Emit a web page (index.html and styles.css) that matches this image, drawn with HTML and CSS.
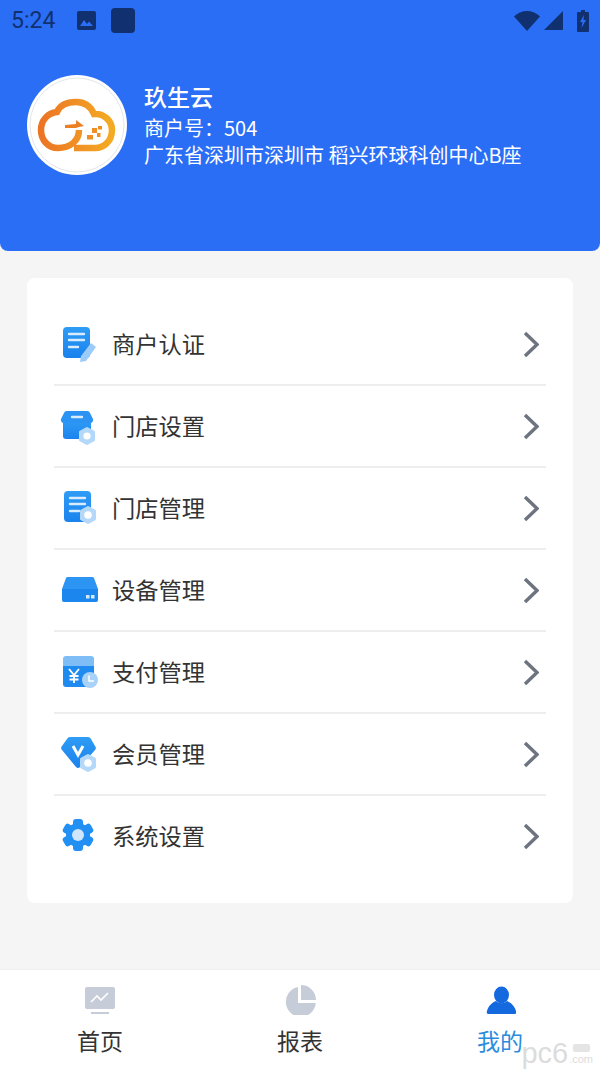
FILE: index.html
```html
<!DOCTYPE html>
<html lang="zh-CN">
<head>
    <meta charset="UTF-8">
    <meta name="viewport" content="width=device-width, initial-scale=1.0">
    <title>玖生云</title>
    <link rel="stylesheet" href="styles.css">
</head>
<body>
    <svg class="defs" width="0" height="0">
        <defs>
            <linearGradient id="blue" x1="0" y1="0" x2="0" y2="1">
                <stop offset="0" stop-color="#2f9cf5"/>
                <stop offset="1" stop-color="#1a82ee"/>
            </linearGradient>
            <linearGradient id="orange" x1="0" y1="0" x2="1" y2="0">
                <stop offset="0" stop-color="#ec7424"/>
                <stop offset="1" stop-color="#f4ab24"/>
            </linearGradient>
        </defs>
    </svg>

    <div class="page">
        <header class="header">
            <div class="status-bar">
                <div class="status-left">
                    <span class="time">5:24</span>
                    <svg class="status-image" width="19" height="19" viewBox="0 0 19 19">
                        <path fill="#11306f" d="M2 0h15a2 2 0 0 1 2 2v15a2 2 0 0 1-2 2H2a2 2 0 0 1-2-2V2a2 2 0 0 1 2-2z"/>
                        <path fill="#2b6ef6" d="M3 15l4-6 3 4 2-2.500 4 4.500z"/>
                    </svg>
                    <span class="status-square"></span>
                </div>
                <div class="status-right">
                    <svg width="26" height="20" viewBox="0 0 26 20"><path fill="#11306f" d="M13 20L0 5.500C3.500 2 8 0 13 0s9.500 2 13 5.500z"/></svg>
                    <svg width="19" height="19" viewBox="0 0 19 19"><path fill="#11306f" d="M19 0v19H0z"/></svg>
                    <svg class="status-battery" width="12" height="22" viewBox="0 0 12 22">
                        <path fill="#11306f" d="M4 0h4v2h3a1 1 0 0 1 1 1v18a1 1 0 0 1-1 1H1a1 1 0 0 1-1-1V3a1 1 0 0 1 1-1h3z"/>
                        <path fill="#2b6ef6" d="M7 5L3 12h2.500L4.500 18 9 10H6.500z"/>
                    </svg>
                </div>
            </div>
            <div class="merchant">
                <div class="avatar">
                    <svg width="100" height="100" viewBox="0 0 100 100">
                        <circle cx="50" cy="50" r="47" fill="none" stroke="#e3e6ea" stroke-width="1"/>
                        <path fill="none" stroke="url(#orange)" stroke-width="6.500" d="M52 55C52 66 43 73 31 73C21 73 14 65 14 55C14 45 21 38 30 37C33 30 40 27 49 27C58 27 64 32 67 39C77 38 85 46 85 55C85 66 77 73 68 73L47 73"/>
                        <path fill="#ec7f22" d="M38 50l11-1 0-4 8 6-5 1-3 1-11 0z"/>
                        <path fill="#ef8f23" d="M60 60h6v4.500h-6zM65 53h5v5h-5zM71 51h4v3.500h-4zM70 58h3.500v4h-3.500z"/>
                    </svg>
                </div>
                <div class="merchant-info">
                    <div class="merchant-name">玖生云</div>
                    <div class="merchant-line">商户号：504</div>
                    <div class="merchant-line">广东省深圳市深圳市 稻兴环球科创中心B座</div>
                </div>
            </div>
        </header>

        <main class="content">
            <div class="card">
                <div class="row">
                    <svg class="row-icon" width="40" height="38" viewBox="0 0 40 38">
                        <rect x="4" y="2" width="27" height="31" rx="4" fill="url(#blue)"/>
                        <path stroke="#d8ecfd" stroke-width="2.400" stroke-linecap="round" d="M10 9h15M10 15h15M10 22h9"/>
                        <path fill="#9ccbf8" d="M32 18l5 4-10 14-6 1 1-6z"/>
                    </svg>
                    <span class="row-label">商户认证</span>
                    <svg class="chevron" width="16" height="27" viewBox="0 0 16 27"><path d="M2 2l12 11.500L2 25"/></svg>
                </div>
                <div class="row">
                    <svg class="row-icon" width="40" height="38" viewBox="0 0 40 38">
                        <path fill="url(#blue)" d="M4 14h28v15a3 3 0 0 1-3 3H7a3 3 0 0 1-3-3z"/>
                        <path fill="#2b93f3" d="M8 4h20a3 3 0 0 1 3 2l3 6a3 3 0 0 1-3 4H5a3 3 0 0 1-3-4l3-6a3 3 0 0 1 3-2z"/>
                        <path stroke="#d8ecfd" stroke-width="2.400" stroke-linecap="round" d="M13 10h10"/>
                        <polygon points="28,21.500 34.500,25 34.500,33 28,36.500 21.500,33 21.500,25" fill="#b4d8fa" stroke="#b4d8fa" stroke-width="3" stroke-linejoin="round"/>
                        <circle cx="28" cy="29" r="3.600" fill="#fff"/>
                    </svg>
                    <span class="row-label">门店设置</span>
                    <svg class="chevron" width="16" height="27" viewBox="0 0 16 27"><path d="M2 2l12 11.500L2 25"/></svg>
                </div>
                <div class="row">
                    <svg class="row-icon" width="40" height="38" viewBox="0 0 40 38">
                        <rect x="5" y="2" width="27" height="31" rx="4" fill="url(#blue)"/>
                        <path stroke="#d8ecfd" stroke-width="2.400" stroke-linecap="round" d="M11 9h15M11 15h15M11 22h9"/>
                        <polygon points="29,18.500 35.500,22 35.500,30 29,33.500 22.500,30 22.500,22" fill="#b4d8fa" stroke="#b4d8fa" stroke-width="3" stroke-linejoin="round"/>
                        <circle cx="29" cy="26" r="3.800" fill="#fff"/>
                    </svg>
                    <span class="row-label">门店管理</span>
                    <svg class="chevron" width="16" height="27" viewBox="0 0 16 27"><path d="M2 2l12 11.500L2 25"/></svg>
                </div>
                <div class="row">
                    <svg class="row-icon" width="40" height="38" viewBox="0 0 40 38">
                        <path fill="#2c95f4" d="M9 6h24a2 2 0 0 1 2 1l4 11H3L7 7a2 2 0 0 1 2-1z"/>
                        <path fill="#1c86ef" d="M3 18h36v11a2 2 0 0 1-2 2H5a2 2 0 0 1-2-2z"/>
                        <rect x="27" y="24" width="3.500" height="3.500" fill="#d6eafc"/>
                        <rect x="32" y="24" width="3.500" height="3.500" fill="#d6eafc"/>
                    </svg>
                    <span class="row-label">设备管理</span>
                    <svg class="chevron" width="16" height="27" viewBox="0 0 16 27"><path d="M2 2l12 11.500L2 25"/></svg>
                </div>
                <div class="row">
                    <svg class="row-icon" width="40" height="38" viewBox="0 0 40 38">
                        <path fill="#1f8bf1" d="M4 13h31v18a3 3 0 0 1-3 3H7a3 3 0 0 1-3-3z"/>
                        <path fill="#7fbdf7" d="M7 3h25a3 3 0 0 1 3 3v7H4V6a3 3 0 0 1 3-3z"/>
                        <path fill="none" stroke="#fff" stroke-width="1.800" d="M10 16l5 6 5-6M15 22v8M10.500 23h9M10.500 26.500h9"/>
                        <circle cx="31" cy="27" r="8" fill="#a9d2f9"/>
                        <path fill="none" stroke="#fff" stroke-width="1.500" d="M30 22.500V28h5"/>
                    </svg>
                    <span class="row-label">支付管理</span>
                    <svg class="chevron" width="16" height="27" viewBox="0 0 16 27"><path d="M2 2l12 11.500L2 25"/></svg>
                </div>
                <div class="row">
                    <svg class="row-icon" width="40" height="38" viewBox="0 0 40 38">
                        <path fill="url(#blue)" d="M11 2h18a4 4 0 0 1 3 2l4 7a3 3 0 0 1 0 4L21 32a3 3 0 0 1-4 0L3 15a3 3 0 0 1 0-4l5-7a4 4 0 0 1 3-2z"/>
                        <path fill="none" stroke="#fff" stroke-width="3" d="M14 11l5 9 5-9"/>
                        <polygon points="29,20.500 35.500,24 35.500,32 29,35.500 22.500,32 22.500,24" fill="#b4d8fa" stroke="#b4d8fa" stroke-width="3" stroke-linejoin="round"/>
                        <circle cx="29" cy="28" r="3.800" fill="#fff"/>
                    </svg>
                    <span class="row-label">会员管理</span>
                    <svg class="chevron" width="16" height="27" viewBox="0 0 16 27"><path d="M2 2l12 11.500L2 25"/></svg>
                </div>
                <div class="row">
                    <svg class="row-icon" width="40" height="38" viewBox="0 0 40 38">
                        <g fill="#2290f2">
                            <circle cx="19" cy="18" r="12"/>
                            <rect x="14" y="2" width="10" height="32" rx="3"/>
                            <rect x="14" y="2" width="10" height="32" rx="3" transform="rotate(60 19 18)"/>
                            <rect x="14" y="2" width="10" height="32" rx="3" transform="rotate(120 19 18)"/>
                        </g>
                        <circle cx="19" cy="18" r="6" fill="#cfe6fb"/>
                    </svg>
                    <span class="row-label">系统设置</span>
                    <svg class="chevron" width="16" height="27" viewBox="0 0 16 27"><path d="M2 2l12 11.500L2 25"/></svg>
                </div>
            </div>
        </main>

        <nav class="tabbar">
            <div class="tab">
                <svg width="32" height="30" viewBox="0 0 32 30">
                    <rect x="1" y="2" width="30" height="22" rx="2" fill="#c7ccd9"/>
                    <path fill="none" stroke="#fff" stroke-width="1.600" d="M7 17l6-6 4 4 7-7"/>
                    <rect x="7" y="27" width="18" height="2" fill="#c7ccd9"/>
                </svg>
                <span class="tab-label">首页</span>
            </div>
            <div class="tab">
                <svg width="32" height="30" viewBox="0 0 32 30">
                    <path fill="#c7ccd9" d="M14 2v16h17.800A15 15 0 1 1 14 2z"/>
                    <path fill="#c7ccd9" d="M17 0a15 15 0 0 1 15 15H17z"/>
                </svg>
                <span class="tab-label">报表</span>
            </div>
            <div class="tab tab-active">
                <svg width="32" height="30" viewBox="0 0 32 30">
                    <ellipse cx="17.500" cy="10" rx="7.500" ry="8.500" fill="#1469de"/>
                    <path fill="#1469de" d="M12 16c3 3 8 3 11 0 5 2 8 6 9 10a2 2 0 0 1-2 3H5a2 2 0 0 1-2-3c1-4 4-8 9-10z"/>
                </svg>
                <span class="tab-label">我的</span>
            </div>
        </nav>
        <div class="watermark">
            <span class="watermark-name">pc6</span>
            <div class="watermark-side">
                <span class="watermark-box"></span>
                <span>.com</span>
            </div>
        </div>
    </div>
</body>
</html>
```

FILE: styles.css
```css
body {
    margin: 0;
    padding: 0;
    font-family: "Noto Sans CJK SC", "Noto Sans", sans-serif;
    background: #f5f5f5;
}

.defs {
    position: absolute;
}

.page {
    position: relative;
    display: flex;
    flex-direction: column;
    width: 600px;
    height: 1070px;
    overflow: hidden;
}

.header {
    height: 251px;
    box-sizing: border-box;
    background: #2b6ef6;
    border-radius: 0 0 8px 8px;
    color: #fff;
}

.status-bar {
    display: flex;
    justify-content: space-between;
    align-items: center;
    height: 41px;
    padding: 0 11px;
}

.status-left,
.status-right {
    display: flex;
    align-items: center;
}

.time {
    font-family: Roboto, sans-serif;
    font-size: 23px;
    color: #11306f;
    width: 66px;
}

.status-square {
    width: 24px;
    height: 25px;
    margin-left: 15px;
    background: #11306f;
    border-radius: 4px;
}

.status-right {
    gap: 4px;
}

.status-battery {
    margin-left: 10px;
}

.merchant {
    display: flex;
    align-items: center;
    gap: 17px;
    padding: 34px 27px 0;
}

.avatar {
    width: 100px;
    height: 100px;
    background: #fff;
    border-radius: 50%;
}

.merchant-name {
    margin-bottom: 4px;
    font-size: 23px;
    font-weight: 500;
    line-height: 28px;
}

.merchant-line {
    font-size: 20px;
    line-height: 27px;
}

.content {
    flex: 1;
    padding: 27px 27px 0;
}

.card {
    background: #fff;
    border-radius: 8px;
    padding: 26px 27px 27px;
}

.row {
    display: flex;
    align-items: center;
    height: 80px;
    padding: 0 7px 0 5px;
    border-bottom: 2px solid #eeeeee;
}

.row:last-child {
    border-bottom: none;
}

.row-icon {
    margin-right: 13px;
}

.row-label {
    flex: 1;
    margin-bottom: 2px;
    font-size: 23.25px;
    color: #333;
}

.chevron {
    fill: none;
    stroke: #6d7480;
    stroke-width: 3.4;
}

.tabbar {
    display: flex;
    height: 101px;
    box-sizing: border-box;
    padding-top: 15px;
    background: #fff;
    border-top: 1px solid #eeeeee;
}

.tab {
    flex: 1;
    display: flex;
    flex-direction: column;
    align-items: center;
}

.tab-label {
    margin-top: 9px;
    font-size: 23px;
    line-height: 32px;
    color: #333;
}

.tab-active .tab-label {
    color: #2a8cdc;
}

.watermark {
    position: absolute;
    right: 7px;
    bottom: 5px;
    display: flex;
    align-items: flex-end;
    gap: 1px;
    font-family: "Liberation Sans", sans-serif;
    color: #dcdcdc;
}

.watermark-name {
    font-size: 29px;
    line-height: 24px;
}

.watermark-side {
    display: flex;
    flex-direction: column;
    align-items: center;
    font-size: 11px;
    line-height: 11px;
}

.watermark-box {
    width: 17px;
    height: 8px;
    margin-bottom: 2px;
    background: #e4e4e4;
    border-radius: 2px;
}
```
